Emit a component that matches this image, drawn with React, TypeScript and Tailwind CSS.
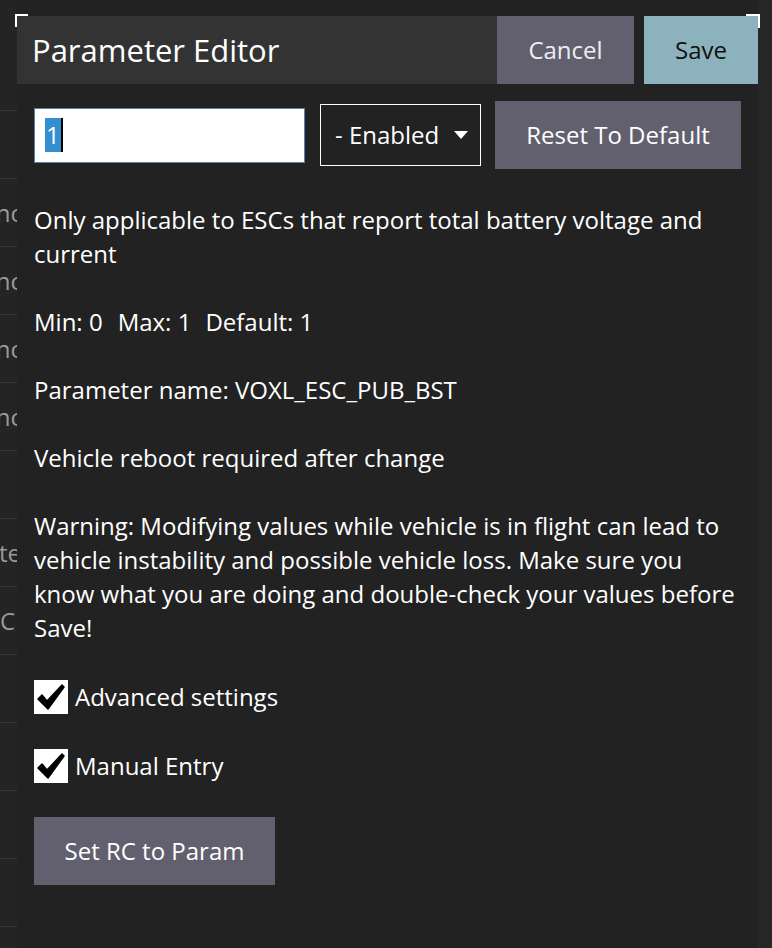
const rows: { t: string; m: string }[] = [
  { t: "", m: "" },
  { t: "nc", m: "-mr-[5px]" },
  { t: "nc", m: "-mr-[5px]" },
  { t: "nc", m: "-mr-[5px]" },
  { t: "nc", m: "-mr-[5px]" },
  { t: "", m: "" },
  { t: "te", m: "-mr-[4px]" },
  { t: "C", m: "mr-[2px]" },
  { t: "", m: "" },
  { t: "", m: "" },
  { t: "", m: "" },
  { t: "", m: "" },
  { t: "", m: "" },
];

function Check({ label }: { label: string }) {
  return (
    <div className="flex items-center h-[35px]">
      <div className="w-[34px] h-[34px] bg-white flex items-center justify-center">
        <svg width="28" height="26" viewBox="0 0 28 26">
          <path
            d="M1 15 L5 11 L10 17 L25 1 L27 3 L11 25 Z"
            fill="#000"
            stroke="#000"
            strokeWidth="1.5"
            strokeLinejoin="round"
          />
        </svg>
      </div>
      <span className="ml-[7px]">{label}</span>
    </div>
  );
}

export default function App() {
  return (
    <div
      className="relative flex w-[772px] h-[948px] overflow-hidden bg-[#222] text-white text-[24px] leading-[34px]"
      style={{ fontFamily: '"Open Sans", sans-serif' }}
    >
      {/* list behind the dialog */}
      <div className="w-[17px] shrink-0 bg-[#242424] pt-[110px] overflow-hidden">
        {rows.map((r, i) => (
          <div
            key={i}
            className="h-[68px] border-t border-[#363636] flex items-center justify-end overflow-hidden whitespace-nowrap text-[#9a9a9a]"
          >
            <span className={r.m}>{r.t}</span>
          </div>
        ))}
      </div>

      <div className="w-[741px] shrink-0 bg-[#222] pt-[16px]">
        <div className="flex h-[68px]">
          <div className="flex-1 bg-[#333] flex items-center pl-[15px] text-[31px]">Parameter Editor</div>
          <button className="w-[137px] bg-[#62606e] text-[#eee]">Cancel</button>
          <button className="w-[114px] ml-[10px] bg-[#8cb3bd] text-[#111]">Save</button>
        </div>

        <div className="px-[17px] pt-[17px] flex flex-col gap-[34px]">
          <div className="flex items-center h-[68px]">
            <div className="w-[271px] h-[55px] bg-white border border-[#5a80b8] flex items-center pl-[10px] text-black">
              <span className="bg-[#3390d0] text-white px-[1px]">1</span>
              <span className="w-[2px] h-[34px] bg-black"></span>
            </div>
            <div className="ml-[15px] w-[161px] h-[62px] border border-white flex items-center pl-[14px]">
              <span>- Enabled</span>
              <svg className="ml-[15px]" width="14" height="8" viewBox="0 0 14 8">
                <path d="M0 0 L14 0 L7 8 Z" fill="#fff" />
              </svg>
            </div>
            <button className="ml-[14px] w-[246px] h-[68px] bg-[#62606e]">Reset To Default</button>
          </div>

          <p>Only applicable to ESCs that report total battery voltage and current</p>
          <p>
            Min: 0<span className="ml-[15px]">Max: 1</span>
            <span className="ml-[14px]">Default: 1</span>
          </p>
          <p>Parameter name: VOXL_ESC_PUB_BST</p>
          <p>Vehicle reboot required after change</p>
          <p>
            Warning: Modifying values while vehicle is in flight can lead to vehicle instability and possible vehicle
            loss. Make sure you know what you are doing and double-check your values before Save!
          </p>

          <Check label="Advanced settings" />
          <Check label="Manual Entry" />

          <button className="w-[241px] h-[68px] bg-[#62606e]">Set RC to Param</button>
        </div>
      </div>

      <div className="flex-1 bg-[#272727]"></div>

      {/* focus corners */}
      <div className="absolute left-[15px] top-[14px] w-[13px] h-[13px] border-l-2 border-t-2 border-white"></div>
      <div className="absolute left-[746px] top-[14px] w-[14px] h-[14px] border-r-2 border-t-2 border-white"></div>
    </div>
  );
}
